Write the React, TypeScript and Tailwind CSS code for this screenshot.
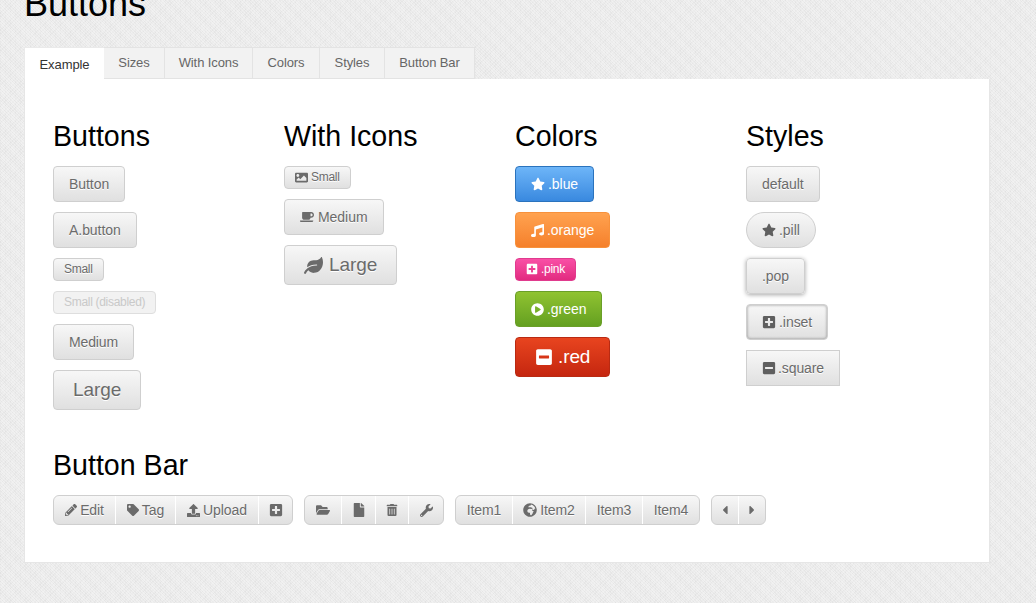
import type { ReactNode } from 'react';
import {
  FaCaretLeft,
  FaCaretRight,
  FaCoffee,
  FaFile,
  FaFolderOpen,
  FaGlobeAfrica,
  FaImage,
  FaLeaf,
  FaMinusSquare,
  FaMusic,
  FaPencilAlt,
  FaPlayCircle,
  FaPlusSquare,
  FaStar,
  FaTag,
  FaTrashAlt,
  FaUpload,
  FaWrench,
} from 'react-icons/fa';

const tabs = ['Sizes', 'With Icons', 'Colors', 'Styles', 'Button Bar'];

const base = 'inline-flex items-center justify-center border whitespace-nowrap';
const gray =
  'border-[#cfcfcf] bg-gradient-to-b from-[#f7f7f7] to-[#e0e0e0] text-[#6b6b6b] [text-shadow:0_1px_0_#fff]';
const small = 'h-[23px] px-[10px] pb-[1px] gap-[3px] text-[12px] rounded-[4px] tracking-[-0.3px]';
const medium = 'h-[36px] px-[15px] gap-[3px] text-[14px] rounded-[4px] tracking-[-0.05px]';
const large = 'h-[40px] px-[19px] gap-[5px] text-[19px] rounded-[4px] tracking-[-0.1px]';

const Heading = ({ children }: { children: ReactNode }) => (
  <h2 className="text-[28.6px] leading-[34px] text-black mb-[13px]">{children}</h2>
);

const BarItem = ({ children, first, last, className }: { children: ReactNode; first?: boolean; last?: boolean; className: string }) => (
  <div
    className={`flex items-center justify-center gap-[3px] h-full border-r border-white last:border-r-0 ${className} ${first ? 'rounded-l-[5px]' : ''} ${last ? 'rounded-r-[5px]' : ''}`}
  >
    {children}
  </div>
);

const Bar = ({ children }: { children: ReactNode }) => (
  <div className="flex h-[30px] border border-[#cfcfcf] rounded-[6px] bg-gradient-to-b from-[#f7f7f7] to-[#e0e0e0] text-[14px] tracking-[-0.1px] text-[#6b6b6b] [text-shadow:0_1px_0_#fff]">
    {children}
  </div>
);

export default function App() {
  return (
    <div className="h-[603px] w-[1036px] overflow-hidden bg-[#ebebeb] bg-[repeating-linear-gradient(45deg,rgba(255,255,255,0.3)_0px,rgba(255,255,255,0.3)_1px,transparent_1px,transparent_2px),repeating-linear-gradient(-45deg,rgba(0,0,0,0.025)_0px,rgba(0,0,0,0.025)_1px,transparent_1px,transparent_3px),repeating-linear-gradient(90deg,rgba(0,0,0,0.015)_0px,rgba(0,0,0,0.015)_1px,transparent_1px,transparent_5px)] font-['Liberation_Sans',sans-serif]">
      <h1 className="-mt-[16px] ml-[24px] text-[36px] leading-[40px] text-black">Buttons</h1>

      <div className="ml-[24px] mt-[23px] w-[966px]">
        {/* Tabs */}
        <div className="flex h-[32px] text-[13px] tracking-[-0.1px]">
          <div className="flex w-[80px] items-center justify-center bg-white text-[#333] pt-[3px] border-l border-t border-[#eaeaea]">Example</div>
          {tabs.map((tab, i) => (
            <div
              key={tab}
              className={`flex items-center justify-center bg-[#f2f2f2] text-[#666] border-t border-r border-b border-[#e3e3e3] ${
                i === 0 ? 'w-[61px]' : i === 1 ? 'w-[88px]' : i === 2 ? 'w-[67px]' : i === 3 ? 'w-[65px]' : 'w-[90px]'
              }`}
            >
              {tab}
            </div>
          ))}
        </div>

        {/* Panel */}
        <div className="h-[484px] bg-white border border-t-0 border-[#e6e6e6] pl-[28px] pt-[40px]">
          <div className="grid grid-cols-[repeat(4,231px)]">
            <div className="flex flex-col items-start">
              <Heading>Buttons</Heading>
              <div className="flex flex-col items-start gap-[10px]">
                <div className={`${base} ${gray} ${medium}`}>Button</div>
                <div className={`${base} ${gray} ${medium}`}>A.button</div>
                <div className={`${base} ${gray} ${small} px-[9.5px]`}>Small</div>
                <div className={`${base} ${small} px-[10.5px] border-[#dedede] bg-[#f2f2f2] text-[#c9c9c9]`}>Small (disabled)</div>
                <div className={`${base} ${gray} ${medium} tracking-[-0.15px]`}>Medium</div>
                <div className={`${base} ${gray} ${large}`}>Large</div>
              </div>
            </div>

            <div className="flex flex-col items-start">
              <Heading>With Icons</Heading>
              <div className="flex flex-col items-start gap-[10px]">
                <div className={`${base} ${gray} ${small} px-[9.5px]`}><FaImage className="text-[13px]" />Small</div>
                <div className={`${base} ${gray} ${medium} gap-[4px]`}><FaCoffee className="text-[14px]" />Medium</div>
                <div className={`${base} ${gray} ${large} gap-[6px]`}><FaLeaf className="text-[19px]" />Large</div>
              </div>
            </div>

            <div className="flex flex-col items-start">
              <Heading>Colors</Heading>
              <div className="flex flex-col items-start gap-[10px]">
                <div className={`${base} ${medium} border-[#2b73bd] bg-gradient-to-b from-[#6db5f8] to-[#3989df] text-white`}><FaStar className="text-[14px]" />.blue</div>
                <div className={`${base} ${medium} border-[#f7913c] bg-gradient-to-b from-[#ffa24f] to-[#f5802a] text-white`}><FaMusic className="text-[13px]" />.orange</div>
                <div className={`${base} ${small} gap-[1px] px-[9.5px] border-[#e03b8e] bg-gradient-to-b from-[#f94fa6] to-[#e22a80] text-white`}><FaPlusSquare className="text-[12px]" />.pink</div>
                <div className={`${base} ${medium} border-[#6a9f28] bg-gradient-to-b from-[#90c331] to-[#64a021] text-white`}><FaPlayCircle className="text-[13px]" />.green</div>
                <div className={`${base} ${large} gap-[3px] border-[#b92a12] bg-gradient-to-b from-[#e8441f] to-[#c5260f] text-white`}><FaMinusSquare className="text-[18px]" />.red</div>
              </div>
            </div>

            <div className="flex flex-col items-start">
              <Heading>Styles</Heading>
              <div className="flex flex-col items-start gap-[10px]">
                <div className={`${base} ${gray} ${medium}`}>default</div>
                <div className={`${base} ${gray} ${medium} rounded-[18px]`}><FaStar className="text-[14px] text-[#5f5f5f]" />.pill</div>
                <div className={`${base} ${gray} ${medium} shadow-[0_1px_4px_rgba(0,0,0,0.35)]`}>.pop</div>
                <div className={`${base} ${gray} ${medium} gap-[1px] shadow-[inset_0_0_3px_rgba(0,0,0,0.4)]`}><FaPlusSquare className="text-[14px] text-[#5f5f5f]" />.inset</div>
                <div className={`${base} ${gray} h-[36px] px-[15px] gap-[2px] text-[14px] tracking-[-0.1px]`}><FaMinusSquare className="text-[14px] text-[#5f5f5f]" />.square</div>
              </div>
            </div>
          </div>

          {/* Button Bar */}
          <div className="mt-[38px]">
            <Heading>Button Bar</Heading>
            <div className="flex gap-[11px]">
              <Bar>
                <BarItem first className="w-[62px]"><FaPencilAlt className="text-[12px]" />Edit</BarItem>
                <BarItem className="w-[60px]"><FaTag className="text-[12px]" />Tag</BarItem>
                <BarItem className="w-[83px]"><FaUpload className="text-[13px]" />Upload</BarItem>
                <BarItem last className="w-[33px]"><FaPlusSquare className="text-[14px]" /></BarItem>
              </Bar>
              <Bar>
                <BarItem first className="w-[37px]"><FaFolderOpen className="text-[14px]" /></BarItem>
                <BarItem className="w-[34px]"><FaFile className="text-[14px]" /></BarItem>
                <BarItem className="w-[33px]"><FaTrashAlt className="text-[12px]" /></BarItem>
                <BarItem last className="w-[34px]"><FaWrench className="text-[13px]" /></BarItem>
              </Bar>
              <Bar>
                <BarItem first className="w-[57px]">Item1</BarItem>
                <BarItem className="w-[73px]"><FaGlobeAfrica className="text-[14px]" />Item2</BarItem>
                <BarItem className="w-[57px]">Item3</BarItem>
                <BarItem last className="w-[56px]">Item4</BarItem>
              </Bar>
              <Bar>
                <BarItem first className="w-[27px]"><FaCaretLeft className="text-[14px]" /></BarItem>
                <BarItem last className="w-[26px]"><FaCaretRight className="text-[14px]" /></BarItem>
              </Bar>
            </div>
          </div>
        </div>
      </div>
    </div>
  );
}
